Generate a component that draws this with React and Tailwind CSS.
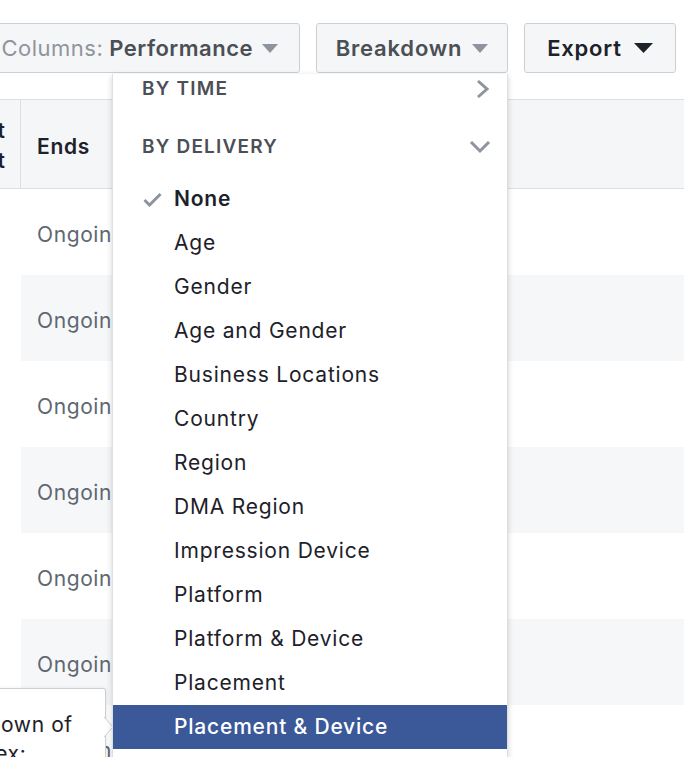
import React from "react";

const items = [
  "None",
  "Age",
  "Gender",
  "Age and Gender",
  "Business Locations",
  "Country",
  "Region",
  "DMA Region",
  "Impression Device",
  "Platform",
  "Platform & Device",
  "Placement",
  "Placement & Device",
];

function Caret({ dark }) {
  return dark ? (
    <svg width="19" height="10" viewBox="0 0 19 10">
      <path d="M0 0h19L9.5 10z" fill="#1d2129" />
    </svg>
  ) : (
    <svg width="16" height="9" viewBox="0 0 16 9">
      <path d="M0 0h16L8 9z" fill="#8d949e" />
    </svg>
  );
}

export default function App() {
  const rows = [0, 1, 2, 3, 4, 5, 6];
  return (
    <div
      className="relative w-[684px] h-[757px] overflow-hidden bg-white"
      style={{ fontFamily: "Inter, 'Noto Sans', sans-serif" }}
    >
      {/* toolbar */}
      <div className="flex gap-4 pt-[23px] ml-[-14px]">
        <button className="w-[314px] h-[50px] pr-[21px] flex items-center justify-end gap-[9px] bg-[#f5f6f7] border border-[#ccd0d5] rounded-[3px] text-[22px] tracking-[0.5px]">
          <span className="text-[#90949c]">Columns:</span>
          <span className="text-[#4b4f56] font-semibold -ml-[3px]">Performance</span>
          <Caret />
        </button>
        <button className="w-[192px] h-[50px] flex items-center justify-center gap-[10px] bg-[#f5f6f7] border border-[#ccd0d5] rounded-[3px] text-[22px] tracking-[0.8px] text-[#4b4f56] font-semibold">
          Breakdown
          <Caret />
        </button>
        <button className="w-[152px] h-[50px] flex items-center justify-center gap-3 bg-[#f5f6f7] border border-[#ccd0d5] rounded-[3px] text-[22px] tracking-[0.8px] text-[#1d2129] font-semibold">
          Export
          <Caret dark />
        </button>
      </div>

      {/* table */}
      <div className="mt-[26px]">
        <div className="flex h-[90px] border-y border-[#dddfe2] bg-[#f5f6f7]">
          <div className="w-[21px] pt-1 border-r border-[#dddfe2] overflow-hidden flex flex-col justify-center items-end pr-[15px] text-[21px] font-semibold text-[#1d2129] leading-[30px]">
            <span className="whitespace-nowrap">Amount</span>
            <span className="whitespace-nowrap">Spent</span>
          </div>
          <div className="flex-1 pt-[5px] flex items-center pl-4 text-[21px] tracking-[0.7px] font-semibold text-[#1d2129]">
            Ends
          </div>
        </div>
        {rows.map((r) => (
          <div key={r} className="flex h-[86px]">
            <div className="w-[21px] bg-white" />
            <div
              className={
                "flex-1 pt-[5px] flex items-center pl-4 text-[21px] tracking-[0.6px] text-[#606770] " +
                (r % 2 === 1 ? "bg-[#f6f7f9]" : "bg-white")
              }
            >
              Ongoing
            </div>
          </div>
        ))}
      </div>

      {/* tooltip */}
      <div className="absolute left-0 top-[688px] w-[106px] h-[90px] bg-white border border-l-0 border-[#ccd0d5] rounded-tr-[3px] shadow-[0_1px_4px_rgba(0,0,0,0.12)]">
        <div className="ml-[-72px] pt-[21px] text-[21px] tracking-[0.6px] leading-[29px] text-[#1d2129] whitespace-nowrap">
          <div>Breakdown of</div>
          <div>Ad index:</div>
        </div>
        <svg className="absolute right-[-9px] top-[28px]" width="10" height="20" viewBox="0 0 10 20">
          <path d="M0 0L9 10L0 20z" fill="#fff" />
          <path d="M0 0L9 10L0 20" fill="none" stroke="#ccd0d5" strokeWidth="1" />
        </svg>
      </div>

      {/* breakdown menu */}
      <div className="absolute left-[112px] top-[74px] w-[396px] h-[700px] pt-[1px] bg-white border-x border-[#dddfe2] shadow-[0_2px_6px_rgba(0,0,0,0.18)]">
        <div className="h-[28px] flex items-center justify-between pl-[29px] pr-[17px]">
          <span className="text-[19px] font-semibold tracking-[1.2px] text-[#4b4f56]">BY TIME</span>
          <svg width="14" height="20" viewBox="0 0 14 20">
            <path d="M2 2l9 8-9 8" fill="none" stroke="#8d949e" strokeWidth="3" />
          </svg>
        </div>
        <div className="mt-[22px] h-[44px] flex items-center justify-between pl-[29px] pr-[16px]">
          <span className="text-[19px] font-semibold tracking-[1.2px] text-[#4b4f56]">BY DELIVERY</span>
          <svg width="22" height="14" viewBox="0 0 22 14">
            <path d="M2 2l9 9 9-9" fill="none" stroke="#8d949e" strokeWidth="3" />
          </svg>
        </div>
        <div className="mt-[8px]">
          {items.map((item, i) => {
            const active = i === items.length - 1;
            const selected = i === 0;
            return (
              <div
                key={item}
                className={
                  "h-[44px] flex items-center text-[21px] tracking-[0.8px] " +
                  (active ? "bg-[#3b5998] text-white font-medium" : "text-[#1d2129]")
                }
              >
                <span className="w-[61px] flex justify-end pr-[12px]">
                  {selected && (
                    <svg width="19" height="15" viewBox="0 0 19 15">
                      <path d="M1.5 8l5 5L17.5 2" fill="none" stroke="#8d949e" strokeWidth="3" />
                    </svg>
                  )}
                </span>
                <span className={selected ? "font-semibold" : ""}>{item}</span>
              </div>
            );
          })}
        </div>
      </div>
    </div>
  );
}
